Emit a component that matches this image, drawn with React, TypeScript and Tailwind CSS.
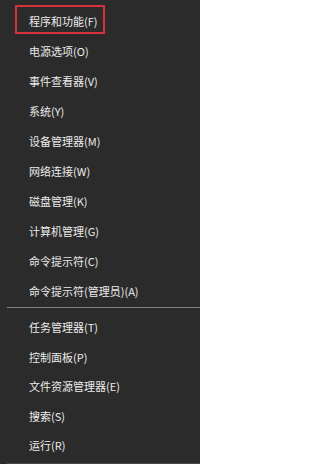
import React from "react";

const group1 = [
  "程序和功能(F)",
  "电源选项(O)",
  "事件查看器(V)",
  "系统(Y)",
  "设备管理器(M)",
  "网络连接(W)",
  "磁盘管理(K)",
  "计算机管理(G)",
  "命令提示符(C)",
  "命令提示符(管理员)(A)",
];
const group2 = [
  "任务管理器(T)",
  "控制面板(P)",
  "文件资源管理器(E)",
  "搜索(S)",
  "运行(R)",
];

const font = { fontFamily: '"Noto Sans CJK SC", "Noto Sans", sans-serif' };

export default function App() {
  return (
    <div
      className="w-[200px] h-[464px] bg-[#2b2b2b] text-[#ececec] text-[11px] overflow-hidden flex flex-col"
      style={font}
    >
      <div className="pt-[6px] flex flex-col">
        {group1.map((t, i) => (
          <div key={t} className="relative h-[30px] flex items-center pl-[29px]">
            {i === 0 && (
              <span className="absolute left-[15px] top-[-1px] w-[90px] h-[29px] border-2 border-[#d6323a]" />
            )}
            <span className="leading-none">{t}</span>
          </div>
        ))}
      </div>
      <div className="ml-[7px] mt-[1px] h-px bg-[#808080]" />
      <div className="pt-[5px] flex flex-col">
        {group2.map((t) => (
          <div key={t} className="h-[29.5px] flex items-center pl-[29px]">
            <span className="leading-none">{t}</span>
          </div>
        ))}
      </div>
      <div className="ml-[7px] mt-[2px] h-px bg-[#4a4a4a]" />
    </div>
  );
}
